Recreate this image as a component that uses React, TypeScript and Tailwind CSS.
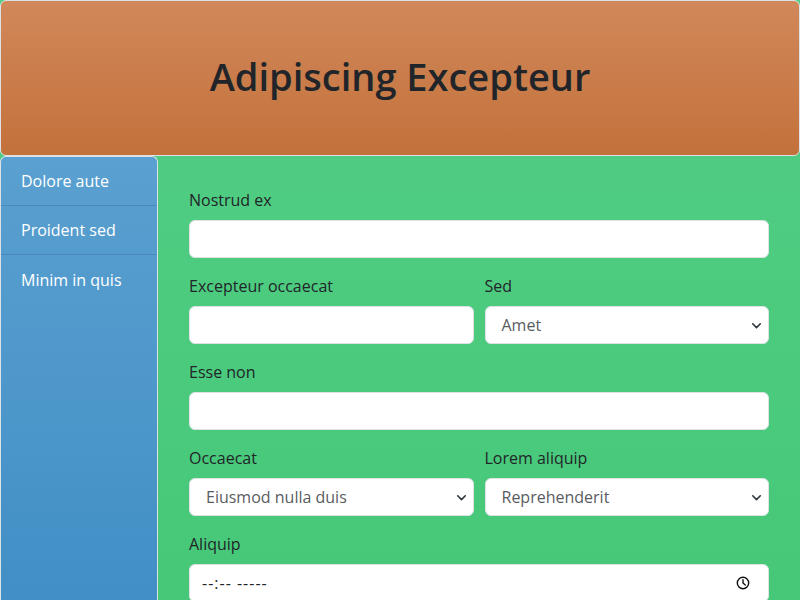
import React from 'react';

const font = { fontFamily: '"Open Sans", "Noto Sans", sans-serif' };

const Chevron: React.FC = () => (
  <svg width="11" height="11" viewBox="0 0 16 16" className="shrink-0">
    <path d="M2.5 5.5L8 11l5.5-5.5" fill="none" stroke="#343a40" strokeWidth="2.4" strokeLinecap="round" strokeLinejoin="round" />
  </svg>
);

const Field: React.FC<{ label: string; children: React.ReactNode }> = ({ label, children }) => (
  <div className="flex flex-col mb-4 min-w-0">
    <label className="text-[16px] leading-6 mb-2 text-[#212529]">{label}</label>
    {children}
  </div>
);

const TextBox: React.FC = () => (
  <div className="h-[38px] bg-white border border-[#dee2e6] rounded-[6px]" />
);

const SelectBox: React.FC<{ value: string }> = ({ value }) => (
  <div className="h-[38px] bg-white border border-[#dee2e6] rounded-[6px] flex items-center justify-between pl-4 pr-[6px] text-[#595c5f]">
    <span className="text-[16px]">{value}</span>
    <Chevron />
  </div>
);

const TimeBox: React.FC = () => (
  <div className="h-[38px] bg-white border border-[#dee2e6] rounded-[6px] flex items-center justify-between pl-3 pr-4 text-[#212529]">
    <span className="text-[16px] tracking-[1px]">--:-- -----</span>
    <svg width="14" height="14" viewBox="0 0 16 16" className="mr-[2px]">
      <circle cx="8" cy="8" r="6.5" fill="none" stroke="#111" strokeWidth="1.6" />
      <path d="M8 4.2V8l2.6 2.4" fill="none" stroke="#111" strokeWidth="1.6" strokeLinecap="round" />
    </svg>
  </div>
);

const navItems = ['Dolore aute', 'Proident sed', 'Minim in quis'];

export default function App() {
  return (
    <div style={font} className="w-[800px] h-[600px] overflow-hidden flex flex-col bg-gradient-to-b from-[#52ce86] to-[#46c878] text-[#212529]">
      <header className="h-[156px] shrink-0 border border-[#dee2e6] rounded-[6px] bg-gradient-to-b from-[#d1885a] to-[#c3713a] flex items-center justify-center pb-[3px]">
        <h1 className="text-[38px] font-semibold leading-tight text-[#212529]">Adipiscing Excepteur</h1>
      </header>
      <div className="flex flex-1 min-h-0">
        <nav className="w-[158px] shrink-0 border border-b-0 border-[#dee2e6] rounded-t-[6px] bg-gradient-to-b from-[#5aa0d0] to-[#418fc6]">
          {navItems.map((item) => (
            <div key={item} className="h-[49px] px-5 flex items-center text-white text-[16px] border-b border-[#4a89b9] last:border-b-0">
              {item}
            </div>
          ))}
        </nav>
        <main className="flex-1 px-[31px] pt-8">
          <Field label="Nostrud ex">
            <TextBox />
          </Field>
          <div className="grid grid-cols-2 gap-x-[11px]">
            <Field label="Excepteur occaecat">
              <TextBox />
            </Field>
            <Field label="Sed">
              <SelectBox value="Amet" />
            </Field>
          </div>
          <Field label="Esse non">
            <TextBox />
          </Field>
          <div className="grid grid-cols-2 gap-x-[11px]">
            <Field label="Occaecat">
              <SelectBox value="Eiusmod nulla duis" />
            </Field>
            <Field label="Lorem aliquip">
              <SelectBox value="Reprehenderit" />
            </Field>
          </div>
          <Field label="Aliquip">
            <TimeBox />
          </Field>
        </main>
      </div>
    </div>
  );
}
